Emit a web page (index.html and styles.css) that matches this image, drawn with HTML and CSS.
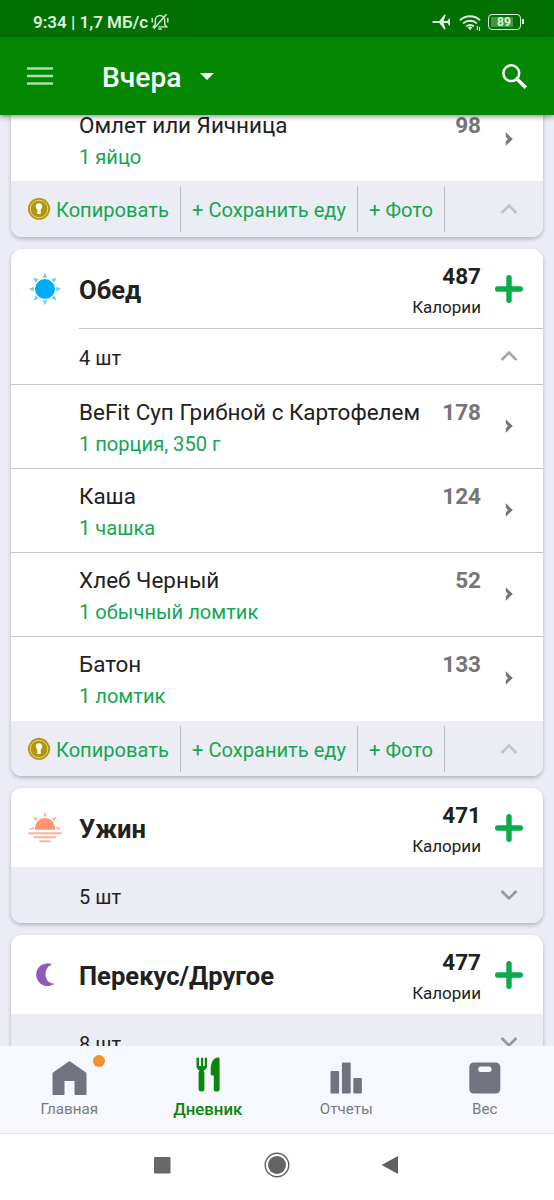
FILE: index.html
```html
<!DOCTYPE html>
<html lang="ru">
<head>
<meta charset="utf-8">
<title>Дневник</title>
<link rel="stylesheet" href="styles.css">
</head>
<body>
<svg class="sprite" aria-hidden="true">
  <symbol id="plus" viewBox="0 0 28 28"><path d="M14 2.7v22.6M2.7 14h22.6" stroke="#06ad49" stroke-width="5.4" stroke-linecap="round" fill="none"/></symbol>
  <symbol id="up" viewBox="0 0 18 12"><path d="M1.6 10 9 2.6 16.4 10" stroke="currentColor" stroke-width="2.5" fill="none"/></symbol>
  <symbol id="down" viewBox="0 0 18 12"><path d="M1.6 2 9 9.4 16.4 2" stroke="currentColor" stroke-width="2.7" fill="none"/></symbol>
  <symbol id="next" viewBox="0 0 8 14"><path d="M.8.3 7.8 7 .8 13.7V9.5L3 7 .8 4.5z" fill="#77777b"/></symbol>
  <symbol id="lock" viewBox="0 0 24 24"><path d="M12 .8 15.5 1.4 18.8 3.1 21.2 5.9 22.8 9.2 23.2 12.6 22.2 16 20.6 18.7 17.8 21.2 14.5 22.7H9.5L6.2 21.2 3.4 18.7 1.8 16 .8 12.6 1.2 9.2 2.8 5.9 5.2 3.1 8.5 1.4Z" fill="#b3960e"/><circle cx="12" cy="12" r="8.8" fill="none" stroke="#eadd9b" stroke-width=".9"/><path d="M12 6.2a3.3 3.3 0 0 1 1.7 6.1V17h-3.4v-4.700A3.300 3.300 0 0 1 12 6.200Z" fill="#fff"/></symbol>
</svg>

<div class="status">
  <span class="status-text">9:34 | 1,7 МБ/с</span>
  <svg class="bell" viewBox="0 0 18 18" fill="none" stroke="#d5ecd5" stroke-width="1.4"><path d="M4.300 11.500V7.200a4.700 4.700 0 0 1 9.400 0v4.300l2 2.400H7.500M4.300 11.500l-2 2.400h2M7.300 16h3.400M15.500 1.200 2.800 15.800M1.200 5v4.500M16.800 5v4.500"/></svg>
  <span class="spacer"></span>
  <svg class="plane" viewBox="0 0 18 16"><path d="M1.300 7h6L12.400.6l1.300.3L11.600 7h3.800L17 4.600h1v6.800h-1L15.400 9h-3.800l2.100 6.100-1.300.3L7.300 9h-6a1 1 0 0 1 0-2Z" fill="#dcf0dc"/></svg>
  <svg class="wifi" viewBox="0 0 23 17"><g fill="none" stroke="#dcf0dc" stroke-width="2"><path d="M1 6.200a14.500 14.500 0 0 1 20 0M4.100 9.400a10 10 0 0 1 13.800 0M7.200 12.400a5.600 5.600 0 0 1 7.600 0"/></g><path d="M8.800 13.500a3 3 0 0 1 4.400 0L11 16.200Z" fill="#dcf0dc"/><path d="M18.300 12v4M20.500 13v4" stroke="#dcf0dc" stroke-width="1.100"/></svg>
  <div class="battery"><span class="battery-level">89</span></div>
</div>

<header class="appbar">
  <svg class="menu" viewBox="0 0 26 18"><path d="M0 1.500h26M0 9h26M0 16.500h26" stroke="#a8e0a5" stroke-width="2.400"/></svg>
  <h1 class="day">Вчера</h1>
  <svg class="caret" viewBox="0 0 14 7"><path d="M0 0h14L7 7z" fill="#fff"/></svg>
  <span class="spacer"></span>
  <svg class="search" viewBox="0 0 25 25" fill="none" stroke="#fff"><circle cx="9.300" cy="9.200" r="7.900" stroke-width="2.500"/><path d="m15 15 7.600 7.600" stroke-width="3.400" stroke-linecap="square"/></svg>
</header>

<main class="diary">
  <section class="card card-first">
    <article class="food"><div class="food-info"><h3>Омлет или Яичница</h3><p>1 яйцо</p></div><b>98</b><svg class="next"><use href="#next"/></svg></article>
    <div class="actions"><svg class="lock"><use href="#lock"/></svg><a class="act copy">Копировать</a><a class="act save">+ Сохранить еду</a><a class="act photo">+ Фото</a><svg class="chev pale"><use href="#up"/></svg></div>
  </section>

  <section class="card">
    <header class="meal">
      <svg class="meal-icon" viewBox="0 0 34 34"><g fill="#6dcaf6"><path id="ray" d="M17 .8 19.200 5.800H14.800Z"/><use href="#ray" transform="rotate(45 17 17)"/><use href="#ray" transform="rotate(90 17 17)"/><use href="#ray" transform="rotate(135 17 17)"/><use href="#ray" transform="rotate(180 17 17)"/><use href="#ray" transform="rotate(225 17 17)"/><use href="#ray" transform="rotate(270 17 17)"/><use href="#ray" transform="rotate(315 17 17)"/></g><circle cx="17" cy="17" r="10" fill="#03acf9"/></svg>
      <h2>Обед</h2><div class="kcal"><b>487</b><span>Калории</span></div><svg class="plus"><use href="#plus"/></svg>
    </header>
    <div class="count open"><span>4 шт</span><svg class="chev"><use href="#up"/></svg></div>
    <article class="food"><div class="food-info"><h3>BeFit Суп Грибной с Картофелем</h3><p>1 порция, 350 г</p></div><b>178</b><svg class="next"><use href="#next"/></svg></article>
    <article class="food"><div class="food-info"><h3>Каша</h3><p>1 чашка</p></div><b>124</b><svg class="next"><use href="#next"/></svg></article>
    <article class="food"><div class="food-info"><h3>Хлеб Черный</h3><p>1 обычный ломтик</p></div><b>52</b><svg class="next"><use href="#next"/></svg></article>
    <article class="food last"><div class="food-info"><h3>Батон</h3><p>1 ломтик</p></div><b>133</b><svg class="next"><use href="#next"/></svg></article>
    <div class="actions"><svg class="lock"><use href="#lock"/></svg><a class="act copy">Копировать</a><a class="act save">+ Сохранить еду</a><a class="act photo">+ Фото</a><svg class="chev pale"><use href="#up"/></svg></div>
  </section>

  <section class="card">
    <header class="meal">
      <svg class="meal-icon" viewBox="0 0 34 34"><g fill="#fbb49c"><path d="M17 .8 19 5.500H15ZM5.200 5.400 10 7.500 7.400 10ZM28.800 5.400 24 7.500 26.600 10ZM.4 18.400 5.600 15.500V18.400ZM33.600 18.400 28.400 15.500V18.400Z"/><path d="M1 22.300H33M6.500 26.300H27.500M12 30.300H22" stroke="#fbb49c" stroke-width="1.900" stroke-linecap="round"/></g><path d="M7 18.800V17a10 10 0 0 1 20 0v1.800Z" fill="#fb946f"/></svg>
      <h2>Ужин</h2><div class="kcal"><b>471</b><span>Калории</span></div><svg class="plus"><use href="#plus"/></svg>
    </header>
    <div class="count"><span>5 шт</span><svg class="chev dark"><use href="#down"/></svg></div>
  </section>

  <section class="card">
    <header class="meal">
      <svg class="meal-icon" viewBox="0 0 34 34"><path d="M24 6.200a11.400 11.400 0 1 0 2.400 19.600C15 25.200 15 9.500 24 6.200Z" fill="#9259bd"/></svg>
      <h2>Перекус/Другое</h2><div class="kcal"><b>477</b><span>Калории</span></div><svg class="plus"><use href="#plus"/></svg>
    </header>
    <div class="count"><span>8 шт</span><svg class="chev dark"><use href="#down"/></svg></div>
  </section>
</main>

<nav class="tabs">
  <a class="tab"><span class="tab-icon"><svg viewBox="0 0 36 36"><path d="M18.500 1 35 12.500Q35.500 13 35.500 14V34q0 1-1 1H24.500q-1 0-1-1V21h-10V34q0 1-1 1H2.500q-1 0-1-1V14q0-1 .5-1.500Z" fill="#71747f"/></svg><i class="badge"></i></span>Главная</a>
  <a class="tab active"><span class="tab-icon"><svg viewBox="0 0 36 36" fill="#0c850b"><path d="M6.500 1v8.500c0 2.500 3 3.500 3.500 5.500h3.200c.5-2 3.800-3 3.800-5.500V1q-1.200-1-2.200 0v8h-1.600V1q-1.100-1-2.200 0v8H9V1q-1.300-1-2.500 0Z"/><rect x="8.600" y="13.500" width="5.800" height="21" rx="2.500"/><path d="M28.800.500C22.500 0 20.700 7 20.700 13v4.200q0 1.300 3.100 1.300V32.500q0 2 2.900 2t2.900-2V1.500q0-.9-.8-1Z"/></svg></span>Дневник</a>
  <a class="tab"><span class="tab-icon"><svg viewBox="0 0 36 36" fill="#71747f"><rect x="2.500" y="11" width="8.600" height="22.500" rx="1"/><rect x="13.900" y="2.500" width="8.800" height="31" rx="1"/><rect x="25.300" y="18" width="8.600" height="15.500" rx="1"/></svg></span>Отчеты</a>
  <a class="tab"><span class="tab-icon"><svg viewBox="0 0 36 36"><rect x="2.300" y="2.500" width="31" height="31" rx="4.500" fill="#71747f"/><rect x="11.200" y="6.500" width="13.300" height="5.600" rx="2.500" fill="#f7f8fe"/></svg></span>Вес</a>
</nav>

<footer class="system">
  <svg class="sys-recent" viewBox="0 0 18 18"><rect x="1" y="1" width="16.500" height="16.500" rx=".8" fill="#686868"/></svg>
  <svg class="sys-home" viewBox="0 0 28 28"><circle cx="14" cy="14" r="11.800" fill="none" stroke="#606060" stroke-width="1.400"/><circle cx="14" cy="14" r="9" fill="#646464"/></svg>
  <svg class="sys-back" viewBox="0 0 18 20"><path d="M17 1v18L.6 10Z" fill="#606060"/></svg>
</footer>
</body>
</html>
```
FILE: styles.css
```css
* { box-sizing: border-box; margin: 0; }
body {
  width: 554px; height: 1200px; overflow: hidden;
  display: flex; flex-direction: column;
  font-family: Roboto, "Noto Sans", sans-serif;
  color: #212121; background: #ebecf5;
}
svg { display: block; flex: none; }
.sprite { position: absolute; width: 0; height: 0; }
.spacer { flex: 1; }

.status { height: 37px; flex: none; display: flex; align-items: flex-start; background: #037003; padding: 0 33px 0 33px; color: #dcf0dc; }
.status-text { font-size: 17px; font-weight: 600; line-height: 20px; margin-top: 12px; white-space: nowrap; width: 114px; }
.bell { width: 18px; height: 18px; margin: 13px 0 0 4px; }
.plane { width: 18px; height: 16px; margin-top: 14px; }
.wifi { width: 23px; height: 17px; margin: 14px 0 0 9px; }
.battery { position: relative; width: 33px; height: 16px; margin: 14px 0 0 6px; border: 1.500px solid #dcf0dc; border-radius: 4px; padding: 2px; }
.battery::after { content: ""; position: absolute; right: -4px; top: 4px; width: 2px; height: 5px; background: #dcf0dc; }
.battery-level { display: block; width: 22px; height: 10px; background: #3f963f; font-size: 12px; line-height: 11px; font-weight: 700; padding-left: 6px; }

.appbar { position: relative; z-index: 1; height: 78px; flex: none; display: flex; align-items: center; background: #048703; padding: 0 27px; box-shadow: 0 2px 5px rgba(0,0,0,.4); }
.menu { width: 26px; height: 18px; }
.day { margin-left: 49px; color: #fff; font-size: 28.200px; font-weight: 500; line-height: 36px; width: 79px; margin-top: 4px; white-space: nowrap; }
.caret { width: 14px; height: 7px; margin-left: 19px; margin-top: 1px; }
.search { width: 25px; height: 25px; margin-top: 1px; }

.diary { height: 931px; flex: none; overflow: hidden; padding: 0 11px; }
.card { border-radius: 11px; background: #fff; box-shadow: 0 2px 4px rgba(0,0,0,.24); margin-bottom: 12px; overflow: hidden; }
.card-first { margin-top: -18px; }
.food { height: 84px; display: flex; align-items: flex-start; padding: 10.500px 30px 0 68px; border-top: 1px solid #c5c5c7; }
.food-info { flex: 1; white-space: nowrap; }
.food h3 { font-size: 22.450px; font-weight: 400; line-height: 32px; }
.food p { font-size: 20.100px; line-height: 33px; color: #13a653; }
.food b { font-size: 22.500px; font-weight: 700; line-height: 32px; color: #757575; }
.next { width: 8px; height: 14px; margin: 23.500px 0 0 24px; }
.last { height: 85px; }
.last + .actions { margin-bottom: -1px; }
.actions { height: 56px; display: flex; align-items: center; background: #ebecf4; color: #13a653; font-size: 20.100px; padding: 0 25px 0 16px; white-space: nowrap; }
.lock { width: 24px; height: 24px; }
.act { height: 46px; line-height: 48px; border-right: 1px solid #b9bac4; }
.copy { width: 130px; padding-left: 5px; }
.save { width: 177px; padding-left: 11px; }
.photo { width: 87px; padding-left: 11px; }
.chev { width: 18px; height: 12px; margin-left: auto; color: #a3a5ad; }
.pale { color: #c1c2ca; }
.dark { color: #9698a4; }

.meal { height: 79px; display: flex; align-items: center; padding: 0 20px 0 17px; }
.meal-icon { width: 34px; height: 34px; }
.meal h2 { flex: 1; margin: 3px 0 0 17px; font-size: 25.600px; font-weight: 700; white-space: nowrap; }
.kcal { display: flex; flex-direction: column; align-items: flex-end; padding-top: 5px; }
.kcal b { font-size: 22.500px; line-height: 32px; }
.kcal span { font-size: 17px; line-height: 31px; }
.plus { width: 28px; height: 28px; margin-left: 14px; }
.count { height: 56px; display: flex; align-items: center; padding: 0 25px 0 68px; font-size: 20px; background: #ebecf4; }
.count span { padding-top: 4px; }
.open { position: relative; background: #fff; }
.open::before { content: ""; position: absolute; left: 68px; right: 0; top: 0; height: 1px; background: #c5c5c7; }

.tabs { position: relative; height: 87px; flex: none; display: grid; grid-template-columns: repeat(4, 1fr); background: #f7f8fe; }
.tab { display: flex; flex-direction: column; align-items: center; padding-top: 11px; color: #787a83; font-size: 15.200px; line-height: 21px; }
.tab-icon { position: relative; width: 36px; height: 42px; }
.tab-icon svg { width: 36px; height: 36px; }
.tab:not(.active) .tab-icon svg { margin-top: 3px; }
.badge { position: absolute; left: 42px; top: -2px; width: 12px; height: 12px; border-radius: 50%; background: #f09229; }
.active { color: #0c850b; font-size: 16.800px; font-weight: 500; }

.system { height: 67px; flex: none; display: flex; align-items: center; padding: 0 0 4px 153px; background: #fff; border-top: 1px solid #e6e7eb; }
.sys-recent { width: 18px; height: 18px; }
.sys-home { width: 28px; height: 28px; margin-left: 92px; }
.sys-back { width: 18px; height: 20px; margin-left: 90px; }
```
